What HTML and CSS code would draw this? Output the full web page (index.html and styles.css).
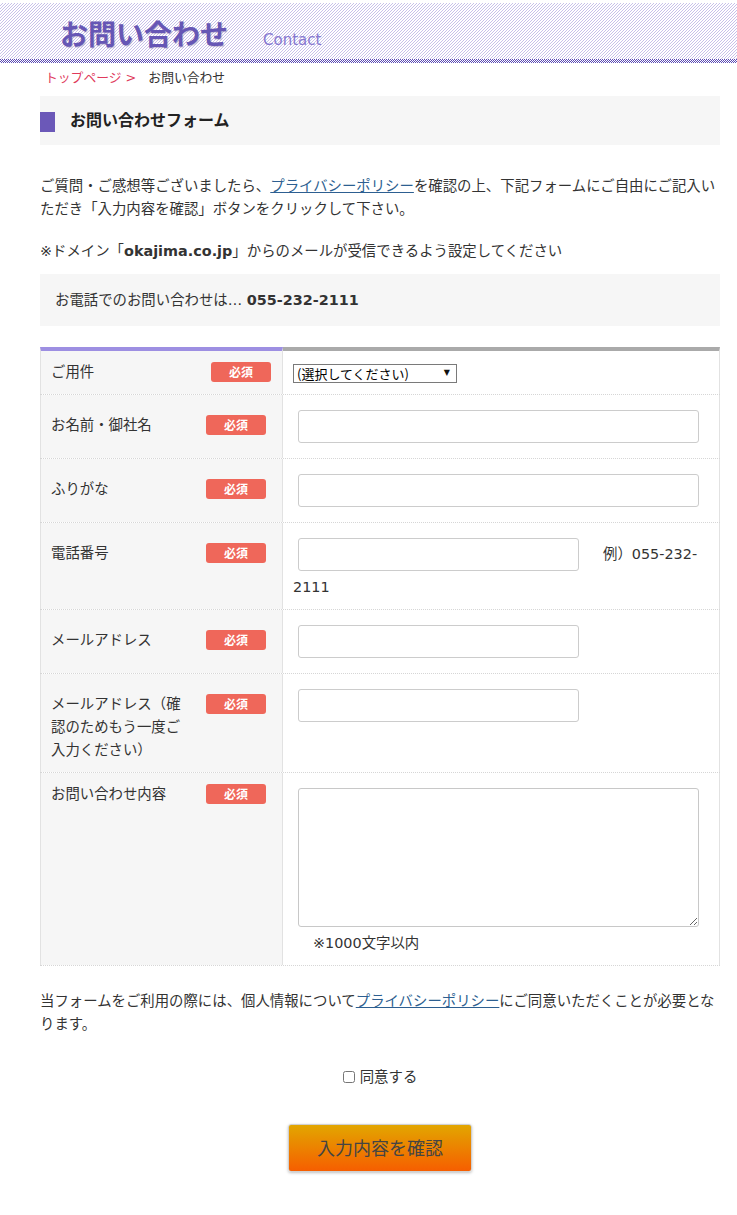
FILE: index.html
```html
<!DOCTYPE html>
<html lang="ja">
<head>
<meta charset="utf-8">
<title>お問い合わせ</title>
<link rel="stylesheet" href="styles.css">
</head>
<body>
<header class="site-header">
  <div class="header-band">
    <h1 class="page-title">お問い合わせ</h1>
    <span class="page-title-en">Contact</span>
  </div>
  <div class="header-rule"></div>
</header>
<main class="content">
  <nav class="breadcrumb">
    <a class="crumb-link" href="#">トップページ &gt;</a>
    <span class="crumb-current">お問い合わせ</span>
  </nav>
  <h2 class="section-heading">お問い合わせフォーム</h2>
  <p class="lead">ご質問・ご感想等ございましたら、<a class="policy-link" href="#">プライバシーポリシー</a>を確認の上、下記フォームにご自由にご記入いただき「入力内容を確認」ボタンをクリックして下さい。</p>
  <p class="notice">※ドメイン「<strong>okajima.co.jp</strong>」からのメールが受信できるよう設定してください</p>
  <div class="phone-box">お電話でのお問い合わせは…&nbsp;<strong>055-232-2111</strong></div>

  <div class="form-table">
    <div class="form-row form-row--first">
      <div class="field-label field-label--top field-label--compact">
        <span class="label-text">ご用件</span><span class="badge">必須</span>
      </div>
      <div class="field-input field-input--select">
        <span class="select-wrap"><select class="select-box"><option>(選択してください)</option></select></span>
      </div>
    </div>
    <div class="form-row">
      <div class="field-label">
        <span class="label-text">お名前・御社名</span><span class="badge">必須</span>
      </div>
      <div class="field-input">
        <input class="text-input text-input--wide" type="text">
      </div>
    </div>
    <div class="form-row">
      <div class="field-label">
        <span class="label-text">ふりがな</span><span class="badge">必須</span>
      </div>
      <div class="field-input">
        <input class="text-input text-input--wide" type="text">
      </div>
    </div>
    <div class="form-row">
      <div class="field-label">
        <span class="label-text">電話番号</span><span class="badge">必須</span>
      </div>
      <div class="field-input">
        <input class="text-input text-input--inline" type="text">例）055-232-<wbr>2111
      </div>
    </div>
    <div class="form-row">
      <div class="field-label">
        <span class="label-text">メールアドレス</span><span class="badge">必須</span>
      </div>
      <div class="field-input">
        <input class="text-input text-input--narrow" type="text">
      </div>
    </div>
    <div class="form-row">
      <div class="field-label">
        <span class="label-text">メールアドレス（確認のためもう一度ご入力ください）</span><span class="badge">必須</span>
      </div>
      <div class="field-input">
        <input class="text-input text-input--narrow" type="text">
      </div>
    </div>
    <div class="form-row">
      <div class="field-label field-label--top">
        <span class="label-text">お問い合わせ内容</span><span class="badge">必須</span>
      </div>
      <div class="field-input">
        <textarea class="text-area"></textarea>
        <div class="field-note">※1000文字以内</div>
      </div>
    </div>
  </div>

  <p class="consent">当フォームをご利用の際には、個人情報について<a class="policy-link" href="#">プライバシーポリシー</a>にご同意いただくことが必要となります。</p>
  <div class="agree"><label class="agree-label"><input class="agree-check" type="checkbox">同意する</label></div>
  <button class="submit-btn" type="button">入力内容を確認</button>
</main>
</body>
</html>
```

FILE: styles.css
```css
* { box-sizing: border-box; }

html, body { background: #fff; }

body {
  margin: 0;
  font-family: "DejaVu Sans", "Noto Sans CJK JP", sans-serif;
  font-size: 14.4px;
  line-height: 23px;
  color: #333;
}

/* header */
.site-header { padding-top: 3px; }

.header-band {
  height: 56px;
  padding: 16px 0 0 60px;
  display: flex;
  align-items: baseline;
  background-color: #fff;
  background-image: url("data:image/svg+xml,%3Csvg xmlns='http://www.w3.org/2000/svg' width='3' height='3' shape-rendering='crispEdges'%3E%3Crect x='2' y='0' width='1' height='1' fill='%23c8c0ea'/%3E%3Crect x='1' y='1' width='1' height='1' fill='%23c8c0ea'/%3E%3Crect x='0' y='2' width='1' height='1' fill='%23c8c0ea'/%3E%3C/svg%3E");
  background-size: 3px 3px;
}

.page-title {
  margin: 0;
  font-family: "Noto Sans CJK JP", sans-serif;
  font-size: 28px;
  line-height: 28px;
  font-weight: bold;
  color: #6656b5;
  text-shadow: 1px 1px 1px rgba(110, 90, 140, 0.35);
}

.page-title-en {
  margin-left: 35px;
  font-family: "DejaVu Sans", sans-serif;
  font-size: 15px;
  color: #8678d0;
}

.header-rule {
  height: 4px;
  background-color: #fff;
  background-image: url("data:image/svg+xml,%3Csvg xmlns='http://www.w3.org/2000/svg' width='2' height='2' shape-rendering='crispEdges'%3E%3Crect x='0' y='0' width='1' height='1' fill='%235a4ab4'/%3E%3Crect x='1' y='1' width='1' height='1' fill='%235a4ab4'/%3E%3C/svg%3E");
  background-size: 2px 2px;
}

/* content */
.content { margin: 0 17px 0 40px; padding-bottom: 40px; }

.breadcrumb {
  margin: 5px 0 8px;
  padding-left: 5px;
  display: flex;
  gap: 12px;
  font-size: 12.8px;
  line-height: 20px;
}

.crumb-link { color: #e03a5c; text-decoration: none; }
.crumb-current { color: #333; }

.section-heading {
  margin: 0;
  height: 49px;
  display: flex;
  align-items: center;
  gap: 15px;
  background: #f6f6f6;
  font-size: 16px;
  font-weight: bold;
  color: #222;
}

.section-heading::before {
  content: "";
  width: 15px;
  height: 20px;
  margin-top: 2px;
  background: #6b58b8;
}

.lead { margin: 30px 0 0; }
.notice { margin: 19px 0 0; }

.policy-link { color: #2d5f91; text-decoration: underline; }

.phone-box {
  margin-top: 11px;
  height: 52px;
  padding: 0 15px;
  display: flex;
  align-items: center;
  background: #f6f6f6;
}

/* form table */
.form-table { margin-top: 21px; }

.form-row {
  display: flex;
  border-bottom: 1px dotted #d6d6d6;
}

.field-label {
  width: 243px;
  flex: none;
  display: flex;
  align-items: flex-start;
  padding: 19px 16px 10px 10px;
  background: #f6f6f6;
  border-left: 1px solid #e2e2e2;
  border-right: 1px solid #e2e2e2;
}

.field-label--top { padding-top: 10px; }
.field-label--compact { padding-right: 11px; }

.label-text { width: 135px; }

.badge {
  margin-left: auto;
  margin-top: 0.5px;
  width: 60px;
  height: 20px;
  flex: none;
  border-radius: 3px;
  background: #ef675a;
  color: #fff;
  font-family: "Noto Sans CJK JP", sans-serif;
  font-size: 12px;
  font-weight: bold;
  line-height: 20px;
  text-align: center;
}

.field-input {
  flex: 1;
  min-width: 0;
  padding: 10px;
  border-right: 1px solid #e2e2e2;
}

.form-row--first .field-label { border-top: 4px solid #9d8fe2; }
.form-row--first .field-input { border-top: 4px solid #aaaaaa; }

.text-input {
  display: block;
  margin: 5px;
  height: 33px;
  border: 1px solid #cccccc;
  border-radius: 3px;
  background: #fff;
  font-size: 14px;
}

.text-input--wide { width: 401px; }
.text-input--narrow { width: 281px; }

.text-input--inline {
  display: inline-block;
  vertical-align: middle;
  width: 281px;
  margin-right: 24px;
}

.text-area {
  display: block;
  margin: 5px;
  width: 401px;
  height: 139px;
  border: 1px solid #c8c8c8;
  border-radius: 3px;
  background: #fff;
}

.field-note { padding-left: 20px; }

.select-wrap {
  position: relative;
  display: inline-block;
  vertical-align: middle;
}

.select-wrap::after {
  content: "▼";
  position: absolute;
  right: 7px;
  top: 3px;
  font-size: 8px;
  line-height: 12px;
  color: #111;
  pointer-events: none;
}

.select-box {
  display: block;
  appearance: none;
  -webkit-appearance: none;
  width: 164px;
  height: 19px;
  margin: 0;
  padding: 0 0 0 3px;
  border: 1px solid #7a7a7a;
  border-radius: 0;
  background: #fff;
  color: #000;
  font-family: "Noto Sans CJK JP", sans-serif;
  font-size: 13px;
  line-height: 17px;
}

/* bottom */
.consent { margin: 24px 0 0; }

.agree { margin-top: 30px; text-align: center; }

.agree-check {
  width: 12px;
  height: 12px;
  margin: 0 5px 0 0;
  vertical-align: -1px;
}

.submit-btn {
  display: block;
  margin: 35px auto 0;
  width: 184px;
  height: 48px;
  padding: 0 0 3px;
  border: 1px solid #d0d0d0;
  border-radius: 3px;
  background: linear-gradient(#e2a600, #f65e00);
  box-shadow: 0 1px 3px rgba(0, 0, 0, 0.25);
  color: #444;
  font-family: "Noto Sans CJK JP", sans-serif;
  font-size: 18px;
}
```
